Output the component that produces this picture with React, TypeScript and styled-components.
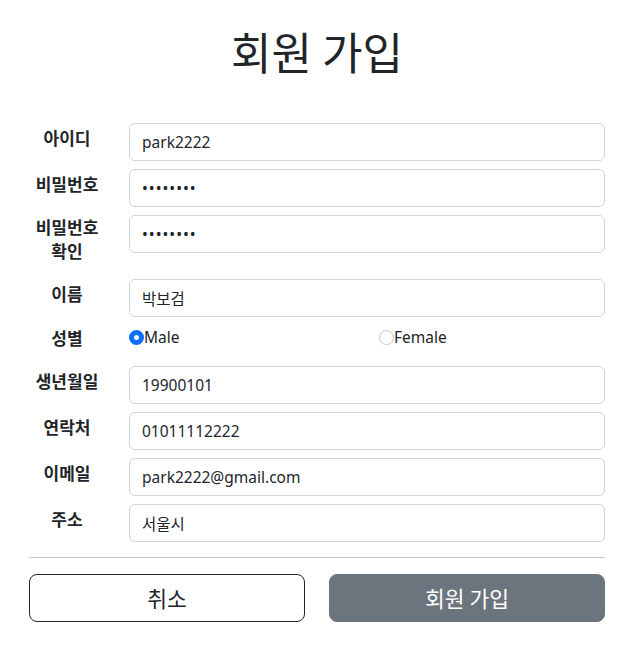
import React from "react";
import styled, { createGlobalStyle } from "styled-components";

const GlobalStyle = createGlobalStyle`
  html, body {
    margin: 0;
    padding: 0;
    background: #ffffff;
  }
  body {
    font-family: "Noto Sans", "Noto Sans CJK KR", sans-serif;
    color: #212529;
  }
  * { box-sizing: border-box; }
`;

const Page = styled.div`
  width: 632px;
  padding: 26px 27px 24px 29px;
`;

const Title = styled.h1`
  margin: 0 0 47px;
  font-family: "Noto Sans CJK KR", sans-serif;
  font-size: 44px;
  font-weight: 400;
  line-height: 50px;
  text-align: center;
  color: #212529;
`;

const Form = styled.form`
  display: flex;
  flex-direction: column;
  gap: 8px;
`;

const Row = styled.div`
  display: grid;
  grid-template-columns: 76px 1fr;
  column-gap: 24px;
  align-items: center;
`;

const Label = styled.label`
  font-family: "Noto Sans CJK KR", sans-serif;
  font-size: 17px;
  font-weight: 700;
  line-height: 24px;
  text-align: center;
  word-break: keep-all;
  padding-bottom: 8px;
  color: #212529;
`;

const TextInput = styled.input<{ $secret?: boolean }>`
  align-self: start;
  width: 100%;
  height: 38px;
  padding: 6px 12px;
  border: 1px solid #ced4da;
  border-radius: 6px;
  font-family: "Noto Sans", "Noto Sans CJK KR", sans-serif;
  font-size: 15.5px;
  line-height: 24px;
  letter-spacing: ${(p) => (p.$secret ? "1px" : "normal")};
  color: #212529;
  background: #fff;
  outline: none;
`;

const RadioGroup = styled.div`
  display: grid;
  grid-template-columns: 1fr 1fr;
  column-gap: 24px;
  height: 33px;
  align-items: start;
`;

const RadioOption = styled.label`
  display: flex;
  align-items: center;
  font-family: "Noto Sans", sans-serif;
  font-size: 15.5px;
  line-height: 24px;
  color: #212529;
`;

const RadioInput = styled.input<{ $checked?: boolean }>`
  appearance: none;
  margin: 0;
  width: 15px;
  height: 15px;
  border-radius: 50%;
  flex: none;
  border: ${(p) => (p.$checked ? "5px solid #0d6efd" : "1px solid #c4c6c9")};
  background: #fff;
`;

const Divider = styled.hr`
  margin: 15px 0 16px;
  border: 0;
  border-top: 1px solid #c8c9ca;
`;

const Buttons = styled.div`
  display: grid;
  grid-template-columns: 1fr 1fr;
  column-gap: 24px;
`;

const Button = styled.button<{ $primary?: boolean }>`
  height: 48px;
  border-radius: 8px;
  font-family: "Noto Sans CJK KR", sans-serif;
  font-size: 21.5px;
  line-height: 30px;
  padding: 8px 16px;
  border: 1px solid ${(p) => (p.$primary ? "#6c757d" : "#212529")};
  background: ${(p) => (p.$primary ? "#6c757d" : "#ffffff")};
  color: ${(p) => (p.$primary ? "#ffffff" : "#212529")};
`;

const fields: { label: string; value: string; type?: string }[] = [
  { label: "아이디", value: "park2222" },
  { label: "비밀번호", value: "12345678", type: "password" },
  { label: "비밀번호 확인", value: "12345678", type: "password" },
  { label: "이름", value: "박보검" },
];

const fields2: { label: string; value: string }[] = [
  { label: "생년월일", value: "19900101" },
  { label: "연락처", value: "01011112222" },
  { label: "이메일", value: "park2222@gmail.com" },
  { label: "주소", value: "서울시" },
];

export default function App() {
  return (
    <>
      <GlobalStyle />
      <Page>
        <Title>회원 가입</Title>
        <Form onSubmit={(e) => e.preventDefault()}>
          {fields.map((f) => (
            <Row key={f.label}>
              <Label>{f.label}</Label>
              <TextInput
                type={f.type ?? "text"}
                $secret={f.type === "password"}
                value={f.value}
                readOnly
              />
            </Row>
          ))}
          <Row>
            <Label>성별</Label>
            <RadioGroup>
              <RadioOption>
                <RadioInput type="radio" name="gender" $checked checked readOnly />
                Male
              </RadioOption>
              <RadioOption>
                <RadioInput type="radio" name="gender" checked={false} readOnly />
                Female
              </RadioOption>
            </RadioGroup>
          </Row>
          {fields2.map((f) => (
            <Row key={f.label}>
              <Label>{f.label}</Label>
              <TextInput type="text" value={f.value} readOnly />
            </Row>
          ))}
        </Form>
        <Divider />
        <Buttons>
          <Button type="button">취소</Button>
          <Button type="button" $primary>
            회원 가입
          </Button>
        </Buttons>
      </Page>
    </>
  );
}
